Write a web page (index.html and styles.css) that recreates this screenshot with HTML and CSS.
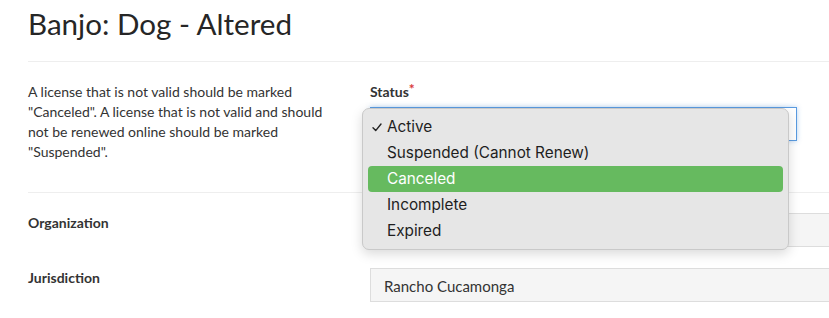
FILE: index.html
```
<!DOCTYPE html>
<html lang="en">
<head>
    <meta charset="UTF-8">
    <meta name="viewport" content="width=device-width, initial-scale=1.0">
    <title>Banjo: Dog - Altered</title>
    <link rel="stylesheet" href="styles.css">
</head>
<body>
    <div class="page">
        <h1>Banjo: Dog - Altered</h1>

        <div class="row row-status">
            <div class="side">
                <p class="help">A license that is not valid should be marked "Canceled". A license that is not valid and should not be renewed online should be marked "Suspended".</p>
            </div>
            <div class="field">
                <label class="label">Status<span class="req">*</span></label>
                <div class="select-wrap">
                    <div class="select"></div>
                    <!-- open native dropdown -->
                    <ul class="menu">
                        <li class="option checked">
                            <svg class="check" width="10" height="9" viewBox="0 0 10 9"><path d="M1 4.8 L3.7 7.6 L9 1" fill="none" stroke="#222" stroke-width="1.4" stroke-linecap="round" stroke-linejoin="round"/></svg>
                            Active
                        </li>
                        <li class="option">Suspended (Cannot Renew)</li>
                        <li class="option hover">Canceled</li>
                        <li class="option">Incomplete</li>
                        <li class="option">Expired</li>
                    </ul>
                </div>
            </div>
        </div>

        <div class="row row-plain">
            <div class="side">
                <span class="label">Organization</span>
            </div>
            <div class="field">
                <div class="input"></div>
            </div>
        </div>

        <div class="row row-plain">
            <div class="side">
                <span class="label">Jurisdiction</span>
            </div>
            <div class="field">
                <div class="input">Rancho Cucamonga</div>
            </div>
        </div>
    </div>
</body>
</html>
```

FILE: styles.css
```
html, body {
    margin: 0;
    padding: 0;
    overflow: hidden;
}
body {
    font-family: Lato, "Open Sans", sans-serif;
    background-color: #fff;
    color: #333;
    font-size: 14px;
    line-height: 20px;
}
.page {
    width: 1100px;
    padding: 6px 0 0 28px;
}
h1 {
    font-size: 29.6px;
    line-height: 36px;
    font-weight: 400;
    color: #262626;
    margin: 0;
    padding-bottom: 19px;
    border-bottom: 1px solid #eee;
}
.row {
    display: flex;
}
.row-status {
    padding: 20px 0 30px;
    border-bottom: 1px solid #eee;
}
.row-plain {
    padding-top: 20px;
}
.row-plain + .row-plain {
    padding-top: 21px;
}
.side {
    width: 342px;
    flex-shrink: 0;
}
.help {
    margin: 0;
    width: 300px;
    color: #333;
}
.field {
    flex: 1;
}
.label {
    display: block;
    font-weight: 700;
    color: #333;
}
.req {
    color: #d9383a;
    font-size: 14px;
    vertical-align: top;
    position: relative;
    top: -3px;
}
.select-wrap {
    position: relative;
    margin-top: 5px;
    width: 427px;
}
.select {
    height: 32px;
    border: 1px solid #5a9be0;
    box-shadow: 0 0 5px rgba(90, 155, 224, 0.45);
    background: #fff;
}
.menu {
    position: absolute;
    left: -8px;
    top: 1px;
    width: 415px;
    margin: 0;
    padding: 5px 5px;
    list-style: none;
    background: #e6e6e6;
    border: 1px solid #c9c9c9;
    border-radius: 7px;
    box-shadow: 0 4px 12px rgba(0, 0, 0, 0.15);
    font-family: Inter, "Noto Sans", sans-serif;
    font-size: 15.3px;
    color: #1e1e1e;
}
.option {
    position: relative;
    height: 26px;
    line-height: 26px;
    padding-left: 19px;
    border-radius: 4px;
}
.option.hover {
    background: #66ba5f;
    color: #fff;
}
.check {
    position: absolute;
    left: 4px;
    top: 9px;
}
.input {
    height: 32px;
    border: 1px solid #ddd;
    background: #f5f5f5;
    padding-left: 13px;
    line-height: 34px;
    font-size: 15px;
    color: #333;
}
```
